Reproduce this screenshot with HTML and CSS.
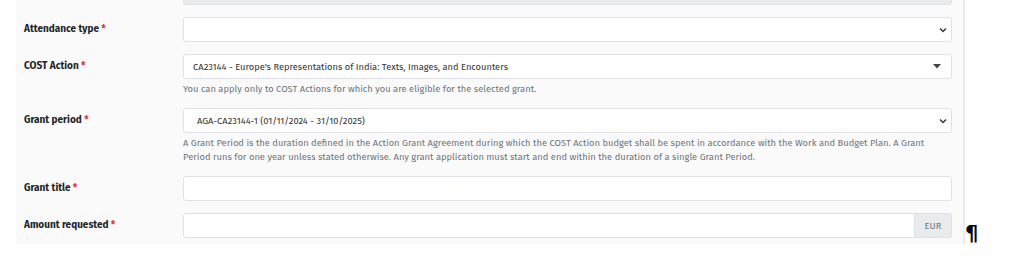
FILE: index.html
```html
<!DOCTYPE html>
<html lang="en">
<head>
  <meta charset="UTF-8">
  <title>Grant application</title>
  <link rel="stylesheet" href="styles.css">
</head>
<body>
  <div class="page">
    <div class="panel">
      <div class="row row-cut">
        <div class="label"></div>
        <div class="field">
          <div class="control disabled"></div>
        </div>
      </div>

      <div class="row">
        <div class="label">Attendance type <span class="req">*</span></div>
        <div class="field">
          <div class="control select">
            <span class="value"></span>
            <svg class="chevron" width="8" height="6" viewBox="0 0 8 6"><path d="M1 1.5 L4 4.5 L7 1.5" fill="none" stroke="#343a40" stroke-width="1.5"/></svg>
          </div>
        </div>
      </div>

      <div class="row">
        <div class="label">COST Action <span class="req">*</span></div>
        <div class="field">
          <div class="control select select2">
            <span class="value">CA23144 - Europe's Representations of India: Texts, Images, and Encounters</span>
            <svg class="caret" width="8" height="5" viewBox="0 0 8 5"><path d="M0 0 L8 0 L4 4.5 Z" fill="#444"/></svg>
          </div>
          <div class="help">You can apply only to COST Actions for which you are eligible for the selected grant.</div>
        </div>
      </div>

      <div class="row">
        <div class="label">Grant period <span class="req">*</span></div>
        <div class="field">
          <div class="control select">
            <span class="value native">AGA-CA23144-1 (01/11/2024 - 31/10/2025)</span>
            <svg class="chevron" width="8" height="6" viewBox="0 0 8 6"><path d="M1 1.5 L4 4.5 L7 1.5" fill="none" stroke="#343a40" stroke-width="1.5"/></svg>
          </div>
          <div class="help">A Grant Period is the duration defined in the Action Grant Agreement during which the COST Action budget shall be spent in accordance with the Work and Budget Plan. A Grant Period runs for one year unless stated otherwise. Any grant application must start and end within the duration of a single Grant Period.</div>
        </div>
      </div>

      <div class="row">
        <div class="label">Grant title <span class="req">*</span></div>
        <div class="field">
          <div class="control"></div>
        </div>
      </div>

      <div class="row">
        <div class="label">Amount requested <span class="req">*</span></div>
        <div class="field">
          <div class="group">
            <div class="control grow"></div>
            <div class="addon">EUR</div>
          </div>
        </div>
      </div>
    </div>
    <span class="pilcrow">¶</span>
  </div>
</body>
</html>
```

FILE: styles.css
```css
body {
  margin: 0;
  background: #fff;
  font-family: "Fira Sans", Lato, "Liberation Sans", sans-serif;
  color: #212529;
}
.page {
  position: relative;
  width: 1024px;
  height: 266px;
  overflow: hidden;
}
.panel {
  display: flow-root;
  margin-left: 16px;
  width: 931px;
  padding: 0 8px 6px 8px;
  background: #fafafa;
  border-right: 2px solid #ececec;
}
.row {
  display: flex;
  align-items: flex-start;
  margin-bottom: 12px;
}
.row:last-child {
  margin-bottom: 0;
}
.row-cut {
  margin-top: -20px;
}
.label {
  width: 159px;
  flex: none;
  font-size: 10px;
  font-weight: bold;
  line-height: 25px;
  color: #212529;
}
.req {
  color: #dc3545;
}
.field {
  width: 769px;
}
.control {
  box-sizing: border-box;
  height: 25px;
  background: #fff;
  border: 1px solid #dee2e6;
  border-radius: 3px;
}
.control.disabled {
  background: #e9ecef;
}
.select {
  display: flex;
  align-items: center;
  justify-content: space-between;
  padding: 0 4px 0 9px;
}
.select2 {
  padding-right: 10px;
}
.value {
  font-size: 9.3px;
  color: #333;
}
.value.native {
  padding-left: 4px;
}
.help {
  margin-top: 3px;
  font-size: 9.35px;
  line-height: 14px;
  color: #6c757d;
}
.group {
  display: flex;
}
.grow {
  flex: 1;
  border-radius: 3px 0 0 3px;
}
.addon {
  box-sizing: border-box;
  height: 25px;
  width: 37px;
  background: #e9ecef;
  border: 1px solid #dee2e6;
  border-left: none;
  border-radius: 0 3px 3px 0;
  font-size: 9.3px;
  line-height: 23px;
  text-align: center;
  color: #6c757d;
}
.pilcrow {
  position: absolute;
  left: 965px;
  top: 245px;
  font-family: "DejaVu Sans", sans-serif;
  font-size: 21px;
  line-height: 1;
  font-weight: bold;
  color: #000;
  transform: translateY(-100%);
}
```
